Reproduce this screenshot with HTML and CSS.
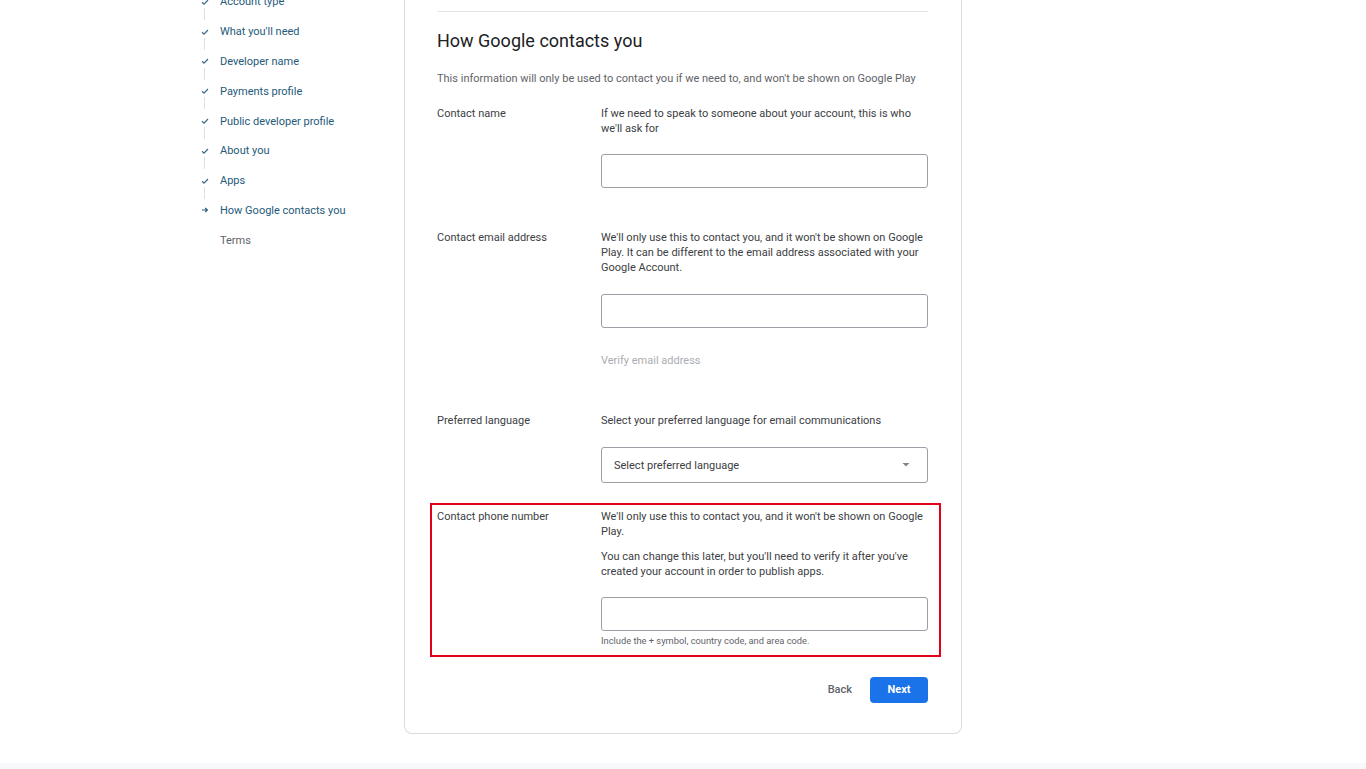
FILE: index.html
```html
<!DOCTYPE html>
<html>
<head>
<meta charset="utf-8">
<link rel="stylesheet" href="styles.css">
</head>
<body>
<div class="page">
  <nav class="steps">
    <div class="step done"><svg class="ic" width="8" height="8" viewBox="0 0 8 8"><path d="M1 4.3l2 1.9L7 2" fill="none" stroke="#3d6a88" stroke-width="1.2"/></svg><span class="lbl">Account type</span></div>
    <div class="step done"><svg class="ic" width="8" height="8" viewBox="0 0 8 8"><path d="M1 4.3l2 1.9L7 2" fill="none" stroke="#3d6a88" stroke-width="1.2"/></svg><span class="lbl">What you'll need</span></div>
    <div class="step done"><svg class="ic" width="8" height="8" viewBox="0 0 8 8"><path d="M1 4.3l2 1.9L7 2" fill="none" stroke="#3d6a88" stroke-width="1.2"/></svg><span class="lbl">Developer name</span></div>
    <div class="step done"><svg class="ic" width="8" height="8" viewBox="0 0 8 8"><path d="M1 4.3l2 1.9L7 2" fill="none" stroke="#3d6a88" stroke-width="1.2"/></svg><span class="lbl">Payments profile</span></div>
    <div class="step done"><svg class="ic" width="8" height="8" viewBox="0 0 8 8"><path d="M1 4.3l2 1.9L7 2" fill="none" stroke="#3d6a88" stroke-width="1.2"/></svg><span class="lbl">Public developer profile</span></div>
    <div class="step done"><svg class="ic" width="8" height="8" viewBox="0 0 8 8"><path d="M1 4.3l2 1.9L7 2" fill="none" stroke="#3d6a88" stroke-width="1.2"/></svg><span class="lbl">About you</span></div>
    <div class="step done"><svg class="ic" width="8" height="8" viewBox="0 0 8 8"><path d="M1 4.3l2 1.9L7 2" fill="none" stroke="#3d6a88" stroke-width="1.2"/></svg><span class="lbl">Apps</span></div>
    <div class="step current"><svg class="ic" width="8" height="8" viewBox="0 0 8 8"><path d="M1 4h5M4.2 2l2.2 2-2.2 2" fill="none" stroke="#2c5f80" stroke-width="1.2"/></svg><span class="lbl">How Google contacts you</span></div>
    <div class="step todo"><span class="ic"></span><span class="lbl">Terms</span></div>
  </nav>
  <main class="card">
    <div class="divider"></div>
    <h1 class="title">How Google contacts you</h1>
    <p class="intro">This information will only be used to contact you if we need to, and won't be shown on Google Play</p>

    <div class="row r-name">
      <div class="label">Contact name</div>
      <div class="field">
        <p class="desc">If we need to speak to someone about your account, this is who we'll ask for</p>
        <div class="input"></div>
      </div>
    </div>

    <div class="row r-email">
      <div class="label">Contact email address</div>
      <div class="field">
        <p class="desc">We'll only use this to contact you, and it won't be shown on Google Play. It can be different to the email address associated with your Google Account.</p>
        <div class="input"></div>
        <div class="verify">Verify email address</div>
      </div>
    </div>

    <div class="row r-lang">
      <div class="label">Preferred language</div>
      <div class="field">
        <p class="desc">Select your preferred language for email communications</p>
        <div class="select"><span>Select preferred language</span><svg class="caret" width="10" height="6" viewBox="0 0 10 6"><path d="M1.5 1h7L5 4.5z" fill="#80868b"/></svg></div>
      </div>
    </div>

    <div class="highlight">
      <div class="row r-phone">
        <div class="label">Contact phone number</div>
        <div class="field">
          <p class="desc">We'll only use this to contact you, and it won't be shown on Google Play.</p>
          <p class="desc p2">You can change this later, but you'll need to verify it after you've created your account in order to publish apps.</p>
          <div class="input"></div>
          <div class="hint">Include the + symbol, country code, and area code.</div>
        </div>
      </div>
    </div>

    <div class="actions">
      <button class="btn back">Back</button>
      <button class="btn next">Next</button>
    </div>
  </main>
</div>
<div class="footer-strip"></div>
</body>
</html>
```

FILE: styles.css
```css
* { box-sizing: border-box; }
html, body { margin: 0; padding: 0; background: #fff; }
body {
  font-family: Roboto, "Noto Sans", Arial, sans-serif;
  color: #3c4043;
  height: 769px;
  overflow: hidden;
  display: flex;
  flex-direction: column;
}
.page {
  display: flex;
  align-items: flex-start;
  padding-left: 196px;
  height: 763px;
}
.steps {
  width: 208px;
  margin-top: -13px;
  display: flex;
  flex-direction: column;
}
.step {
  height: 29.8px;
  display: flex;
  align-items: center;
  font-size: 11px;
  color: #245a7a;
  position: relative;
}
.step .ic {
  flex: none;
  width: 8px;
  height: 8px;
  margin-left: 5px;
  margin-right: 11px;
  display: block;
}
.step span.ic { visibility: hidden; }
.step.done::after {
  content: "";
  position: absolute;
  left: 8px;
  top: 21px;
  height: 12px;
  width: 1px;
  background: #dcdfe3;
}
.step.todo .lbl { color: #5f6368; }
.card {
  width: 558px;
  border: 1px solid #dadce0;
  border-top: none;
  border-radius: 0 0 8px 8px;
  padding: 11px 33px 30px 32px;
}
.divider {
  height: 1px;
  margin-left: 1px;
  background: #e3e3e3;
}
.title {
  margin: 17px 0 0 0;
  font-size: 18px;
  line-height: 24px;
  font-weight: 400;
  color: #202124;
}
.intro {
  margin: 18px 0 0 0;
  font-size: 11px;
  line-height: 15px;
  color: #5f6368;
}
.row {
  display: flex;
  font-size: 11px;
  line-height: 15px;
}
.label {
  width: 164px;
  flex: none;
  color: #3c4043;
}
.field {
  width: 328px;
}
.desc {
  margin: 0;
  color: #3c4043;
}
.input {
  height: 34px;
  border: 1px solid #9aa0a6;
  border-radius: 3px;
  margin-top: 18px;
}
.r-name { margin-top: 20px; }
.r-email { margin-top: 41.5px; }
.r-email .input { margin-top: 19px; }
.verify {
  margin-top: 25.5px;
  color: #a9adb1;
}
.r-lang { margin-top: 45px; }
.select {
  margin-top: 19px;
  height: 36px;
  width: 327px;
  border: 1px solid #9aa0a6;
  border-radius: 3px;
  display: flex;
  align-items: center;
  justify-content: space-between;
  padding: 0 16px 0 12px;
  color: #3c4043;
}
.caret { display: block; }
.highlight {
  margin: 20px -13px 0 -7px;
  border: 2px solid #e2001a;
  padding: 4px 11px 8px 5px;
}
.p2 { margin-top: 10px; }
.r-phone .input { margin-top: 18px; }
.hint {
  margin-top: 3.5px;
  font-size: 9.3px;
  line-height: 12px;
  color: #5f6368;
}
.actions {
  margin-top: 20px;
  display: flex;
  justify-content: flex-end;
  align-items: center;
  gap: 6px;
}
.btn {
  font-family: Roboto, "Noto Sans", Arial, sans-serif;
  font-size: 11px;
  border: none;
  border-radius: 4px;
  height: 26px;
  cursor: pointer;
}
.back {
  background: transparent;
  color: #5f6368;
  padding: 0 12px;
  font-weight: 500;
}
.next {
  background: #1a73e8;
  color: #fff;
  width: 58px;
  font-weight: 700;
}
.footer-strip {
  height: 6px;
  background: #f7f8f9;
}
```
